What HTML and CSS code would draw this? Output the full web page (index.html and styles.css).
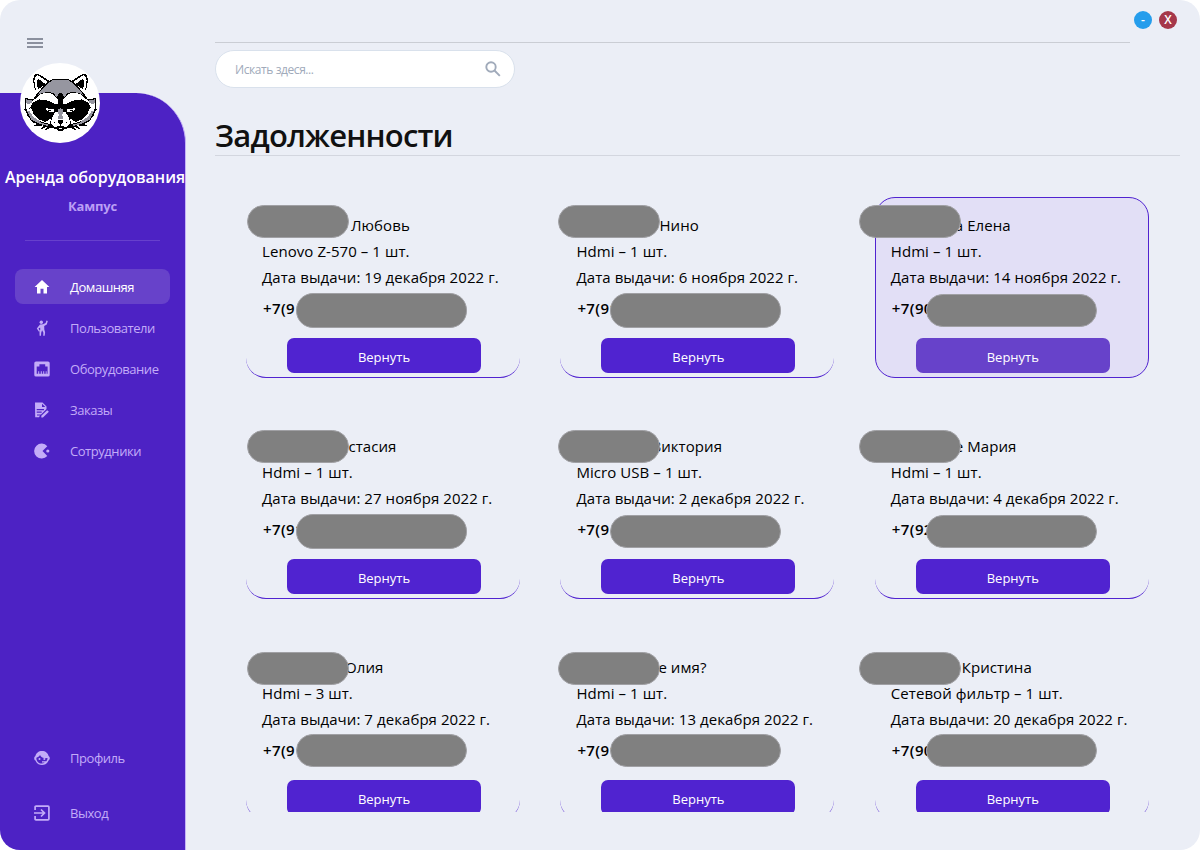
FILE: index.html
```html
<!DOCTYPE html>
<html lang="ru">
<head>
<meta charset="utf-8">
<title>Аренда оборудования</title>
<link rel="stylesheet" href="styles.css">
</head>
<body>
<div class="window">
  <aside class="side">
    <svg class="burger" viewBox="0 0 16 10"><path d="M0 1h16M0 5h16M0 9h16"/></svg>
    <div class="panel">
      <div class="avatar">
        <svg viewBox="15 9 240 240">
          <g id="half">
            <path class="k" d="M137 57H114L103 63 84 50 66 41 57 46 54 62 58 82 66 97 62 108 54 118 30 114V146L26 147 32 154 38 168 52 186 66 192 52 199 86 196 74 209 98 200 88 213 108 203 124 208 132 214H137Z"/>
            <path class="w" d="M67 100L60 78 58 60 62 49 68 46 80 53 98 66 84 80Z"/>
            <path class="k" d="M69 88L65 68 68 57 78 62 91 72 79 82Z"/>
            <path class="g" d="M137 60H115L104 66 90 78 74 96 66 107 84 98 104 96 116 100 126 112 132 100 137 98Z"/>
            <path class="w" d="M54 122L66 112 76 102 98 98 112 102 126 114 133 134 120 132 98 122 72 118 54 128 44 144 40 156 34 146V128Z"/>
            <path class="g" d="M33 118L54 122 50 128 35 134ZM36 152L44 152 60 172 78 188 102 194 98 198 70 190 50 180Z"/>
            <path class="w" d="M41 150L47 142 56 162 72 178 90 186 108 176 104 192 80 186 56 172Z"/>
            <path class="w" d="M89 142L103 147 120 149 114 157 99 154Z"/>
            <path class="k" d="M99 149H108V153H100Z"/>
            <path class="w" d="M137 156L121 156 111 174 107 190 118 201 137 204Z"/>
            <path class="g" d="M137 145L128 148 131 166 129 178H137Z"/>
          </g>
          <use href="#half" transform="matrix(-1 0 0 1 273 0)"/>
          <path class="k" d="M135 98H138L141 118 146 142H127L132 118ZM128 182L132 180H141L145 182 143 188 138 192V199H135V192L130 188ZM121 201L131 198H142L152 201 145 211H128ZM116 186h4v3h-4zM153 186h4v3h-4z"/>
          <path class="w" d="M129 203H144L141 206H132Z"/>
        </svg>
      </div>
      <h1 class="brand">Аренда оборудования</h1>
      <p class="place">Кампус</p>
      <hr class="rule">
      <nav class="nav">
        <a class="item active"><svg viewBox="0 0 16 16"><path d="M8 1L.6 8H3v6.500h3.500V9.800h3v4.700H13V8h2.400z"/></svg><span>Домашняя</span></a>
        <a class="item"><svg viewBox="0 0 16 16"><circle cx="7.300" cy="2.300" r="1.700"/><path d="M9 4.300l2.600-1.200L12.500.5l1.300.4-1 3.500-2.600 1.500.1 3.600.8 2.700-.4 3.500H9.200l.2-3-1.300-2.500-.9 2.500-.2 3H5.600l-.1-3.500.8-3-.2-1.700-1.600 1.100L6 11l-1 .8-2.200-3.200L6 4.600z"/></svg><span>Пользователи</span></a>
        <a class="item"><svg viewBox="0 0 16 16"><path fill-rule="evenodd" d="M2 .5h12Q15.700.5 15.700 2v12q0 1.500-1.700 1.500H2Q.3 15.500.3 14V2Q.3.500 2 .5zM5.400 3.300v2.300H2.700v7.200h1.500v-2.500h1v2.500h1.600v-2.500h1v2.500h1.400v-2.500h1v2.500h1.500v-2.500h.9v2.500h1V5.600h-2.400V3.300z"/></svg><span>Оборудование</span></a>
        <a class="item"><svg viewBox="0 0 16 16"><path fill-rule="evenodd" d="M1 .5h7.500l4 4V7L7 12.500H3v1h3l-1 1.800H1.200zM8 1.700V5h3.400zM2.700 7v1.200H10V7zm0 2.600v1.200h5V9.600z"/><path d="M13.200 8.300l1.700 1.400-6 5.800H7.300v-1.700z"/></svg><span>Заказы</span></a>
        <a class="item"><svg viewBox="0 0 16 16"><path d="M13.300 3.200A7.500 7.500 0 1 0 13.300 13L8.500 8z"/><circle cx="13.800" cy="8" r="1.600"/></svg><span>Сотрудники</span></a>
      </nav>
      <nav class="nav bottom">
        <a class="item"><svg viewBox="0 0 16 16"><path fill-rule="evenodd" d="M8 .9c3.500 0 6 2.100 6.600 5 .8.500 1.200 1.200 1.200 2.300S15.200 10 14.500 10.500C13.500 13.300 11.200 15 8 15s-5.500-1.700-6.500-4.500C.6 10.100.2 9.300.2 8.200s.4-1.800 1.200-2.300C2 3 4.500.9 8 .9zM6 5C5.200 6.500 3.900 7.300 2.400 7.700c-.3 3.300 2.100 5.900 5.300 5.900 1.200 0 2.200-.3 3.100-1H8v-1.300h4.300c.8-.8 1.200-1.800 1.200-3.200C10 8.700 7.300 7.500 6 5z"/><circle cx="5.500" cy="9" r="1"/><circle cx="10.300" cy="9" r="1"/></svg><span>Профиль</span></a>
        <a class="item"><svg class="line" viewBox="0 0 16 16"><path d="M1.100 5V2q0-.9.9-.9h12q.9 0 .9.900v12q0 .9-.9.9H2q-.9 0-.9-.9v-3M0 8h10.500M7 4.500L10.500 8 7 11.500"/></svg><span>Выход</span></a>
      </nav>
    </div>
  </aside>
  <main class="main">
    <div class="controls"><button class="ctl min"><span>-</span></button><button class="ctl close"><span>X</span></button></div>
    <div class="topline"></div>
    <div class="search"><span>Искать здеся...</span><svg viewBox="0 0 16 16"><circle cx="6" cy="6" r="4.700"/><path d="M9.500 9.500l5.300 5.300"/></svg></div>
    <h2 class="title">Задолженности</h2>
    <div class="grid">
      <article class="card c1 r1"><p class="name n1">Любовь</p><p>Lenovo Z-570 – 1 шт.</p><p>Дата выдачи: 19 декабря 2022 г.</p><p class="phone">+7(9</p><button class="return">Вернуть</button><i class="mask who"></i><i class="mask tel tall"></i></article>
      <article class="card c2 r1"><p class="name n2">Нино</p><p>Hdmi – 1 шт.</p><p>Дата выдачи: 6 ноября 2022 г.</p><p class="phone">+7(91</p><button class="return">Вернуть</button><i class="mask who"></i><i class="mask tel tall"></i></article>
      <article class="card c3 r1 hover"><p class="name n3">а Елена</p><p>Hdmi – 1 шт.</p><p>Дата выдачи: 14 ноября 2022 г.</p><p class="phone">+7(90</p><button class="return">Вернуть</button><i class="mask who"></i><i class="mask tel"></i></article>
      <article class="card c1 r2"><p class="name n4">астасия</p><p>Hdmi – 1 шт.</p><p>Дата выдачи: 27 ноября 2022 г.</p><p class="phone">+7(91</p><button class="return">Вернуть</button><i class="mask who"></i><i class="mask tel tall"></i></article>
      <article class="card c2 r2"><p class="name n5">Виктория</p><p>Micro USB – 1 шт.</p><p>Дата выдачи: 2 декабря 2022 г.</p><p class="phone">+7(9</p><button class="return">Вернуть</button><i class="mask who"></i><i class="mask tel"></i></article>
      <article class="card c3 r2"><p class="name n6">е Мария</p><p>Hdmi – 1 шт.</p><p>Дата выдачи: 4 декабря 2022 г.</p><p class="phone">+7(92</p><button class="return">Вернуть</button><i class="mask who"></i><i class="mask tel"></i></article>
      <article class="card c1 r3"><p class="name n7">Юлия</p><p>Hdmi – 3 шт.</p><p>Дата выдачи: 7 декабря 2022 г.</p><p class="phone">+7(9</p><button class="return">Вернуть</button><i class="mask who"></i><i class="mask tel"></i></article>
      <article class="card c2 r3"><p class="name n8">е имя?</p><p>Hdmi – 1 шт.</p><p>Дата выдачи: 13 декабря 2022 г.</p><p class="phone">+7(91</p><button class="return">Вернуть</button><i class="mask who"></i><i class="mask tel"></i></article>
      <article class="card c3 r3"><p class="name n9">Кристина</p><p>Сетевой фильтр – 1 шт.</p><p>Дата выдачи: 20 декабря 2022 г.</p><p class="phone">+7(90</p><button class="return">Вернуть</button><i class="mask who"></i><i class="mask tel"></i></article>
    </div>
  </main>
</div>
</body>
</html>
```
FILE: styles.css
```css
* { box-sizing: border-box; }
body { margin: 0; background: #fff; font-family: "Open Sans", "Noto Sans", sans-serif; color: #000; }
p, h1, h2 { margin: 0; white-space: nowrap; }
button { border: 0; padding: 0; font-family: inherit; }
.window { width: 1200px; height: 850px; border-radius: 20px; overflow: hidden; display: flex; background: #ebeef6; }

.side { width: 186px; flex: none; display: flex; flex-direction: column; }
.burger { width: 16px; height: 10px; margin: 38px 0 45px 27px; stroke: #6c7181; stroke-width: 1.700; flex: none; }
.panel { flex: 1; background: #4d22c4; border-right: 1px solid #c5b2f8; border-radius: 0 50px 0 0; display: flex; flex-direction: column; }
.avatar { width: 80px; height: 80px; margin: -30px 0 0 20px; border-radius: 50%; background: #fff; flex: none; }
.avatar svg { display: block; width: 80px; height: 80px; shape-rendering: crispEdges; }
.k { fill: #000; }
.w { fill: #fff; }
.g { fill: #9696a0; }
.brand { margin: 22px 0 0 5px; font-size: 16px; line-height: 24px; font-weight: 600; color: #fff; }
.place { margin-top: 7px; font-size: 13px; line-height: 20px; font-weight: 700; letter-spacing: -.2px; color: #bb9ff5; text-align: center; }
.rule { width: 135px; height: 1px; margin: 24px 0 0 25px; border: 0; background: #6740cd; flex: none; }
.nav { display: flex; flex-direction: column; gap: 6px; padding: 28px 15px 0; }
.item { height: 35px; display: flex; align-items: center; gap: 20px; padding-left: 19px; border-radius: 8px; color: #c3acf8; font-size: 13px; letter-spacing: -.45px; white-space: nowrap; }
.item svg { width: 16px; height: 16px; fill: #c3acf8; flex: none; }
.item .line { fill: none; stroke: #c3acf8; stroke-width: 1.700; }
.active { background: #6742ca; color: #fff; }
.item.active svg { fill: #fff; }
.bottom { margin-top: auto; gap: 20px; padding: 0 15px 20px; }

.main { flex: 1; min-width: 0; padding: 11px 20px 0 29px; display: flex; flex-direction: column; }
.controls { display: flex; justify-content: flex-end; gap: 7px; padding-right: 3px; }
.ctl { width: 18px; height: 18px; border-radius: 50%; color: #fff; font-size: 12px; font-weight: 600; line-height: 18px; }
.min { background: #259dec; }
.close { background: #a5374a; }
.topline { height: 1px; margin: 13px 50px 0 0; background: #cacdd4; flex: none; }
.search { width: 300px; height: 38px; margin-top: 7px; padding: 0 13px 0 19px; border: 1px solid #d9e1ec; border-radius: 19px; background: #fff; display: flex; align-items: center; justify-content: space-between; font-size: 12px; letter-spacing: -.42px; color: #a0aaba; }
.search svg { width: 16px; height: 16px; fill: none; stroke: #a0aaba; stroke-width: 1.900; }
.title { height: 68px; padding-top: 25px; border-bottom: 1px solid #d3d6df; font-size: 31px; line-height: 44px; font-weight: 600; letter-spacing: -.8px; color: #111; }
.grid { height: 656px; overflow: hidden; margin-left: -5px; padding: 41px 0 0 36px; display: grid; grid-template-columns: repeat(3, 274px); grid-auto-rows: 181px; gap: 40px 40.400px; }
.card { position: relative; border-bottom: 1px solid #5023d0; border-radius: 20px; padding: 15px 15px 0 16px; font-size: 15px; line-height: 26px; letter-spacing: .07px; }
.card.hover { background: #e2dff6; border: 1px solid #5023d0; padding: 14px 14px 0 15px; }
.phone { height: 36px; line-height: 36px; padding-left: 1px; font-weight: 600; letter-spacing: .4px; }
.return { display: block; width: 194px; height: 35px; margin: 12px 0 0 25px; border-radius: 7px; background: #5023d0; color: #fff; font-size: 13px; line-height: 35px; padding-top: 2px; }
.hover .return { background: #6742ca; }
.mask { position: absolute; background: #808080; border: 1px solid #a0a0a4; border-radius: 17px; }
.who { width: 102px; height: 33px; }
.tel { width: 171px; height: 33px; left: 50px; top: 97px; }
.c3 .tel { left: 51px; }
.hover .tel { left: 50px; top: 96px; }
.tel.tall { height: 35px; top: 96px; }
.r3 .tel { top: 95px; }
.c1 .who { left: 1px; }
.c2 .who { left: -2px; }
.c3 .who { left: -16px; }
.hover .who { left: -17px; }
.r1 .who { top: 8px; }
.hover.r1 .who { top: 7px; }
.r2 .who { top: 12px; }
.r3 .who { top: 13px; }
.n1 { padding-left: 89px; }
.n2 { padding-left: 83px; }
.n3 { padding-left: 64px; }
.n4 { padding-left: 78px; }
.n5 { padding-left: 75px; }
.n6 { padding-left: 64px; }
.n7 { padding-left: 79px; }
.n8 { padding-left: 82px; }
.n9 { padding-left: 71px; }
```
